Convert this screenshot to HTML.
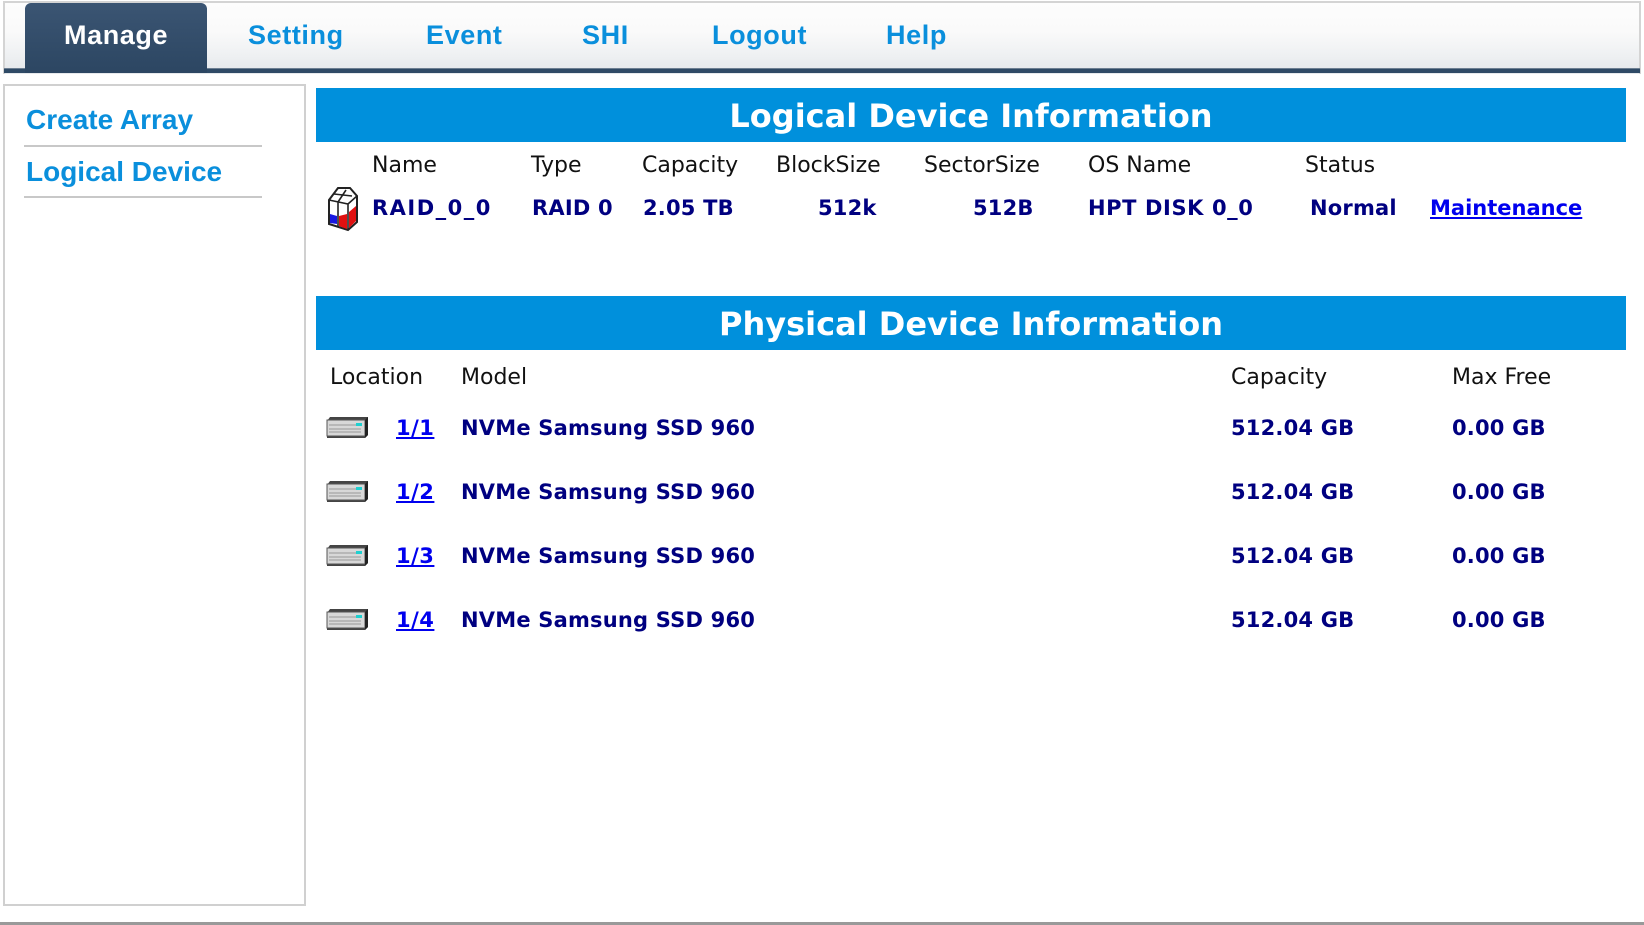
<!DOCTYPE html>
<html><head><meta charset="utf-8"><style>
*{margin:0;padding:0;box-sizing:border-box}
body{width:1644px;height:925px;background:#fff;position:relative;overflow:hidden;font-family:"DejaVu Sans",Verdana,sans-serif}
.a{position:absolute;white-space:nowrap}
#hdr{position:absolute;left:3px;top:1px;width:1638px;height:73px;border:2px solid #d4d4d4;border-bottom:none;background:linear-gradient(#fdfdfd 0,#fafafa 40%,#eef0f2 75%,#e6e9ec 95%)}
#line{position:absolute;left:4px;top:68px;width:1636px;height:5px;background:#2f4a66;border-top:1px solid #6d7f92}
#tab{position:absolute;left:25px;top:3px;width:182px;height:70px;background:linear-gradient(#3b5573,#2c4662);border-radius:6px 6px 0 0}
.nav{font-family:"Liberation Sans",Arial,sans-serif;font-weight:bold;font-size:27px;letter-spacing:0.6px;color:#0a8fdc;top:20px}
#side{position:absolute;left:3px;top:84px;width:303px;height:822px;border:2px solid #d0d0d0}
.sl{font-family:"Liberation Sans",Arial,sans-serif;font-weight:bold;font-size:28px;color:#0a8fdc;left:26px}
.hr{position:absolute;left:24px;width:238px;height:2px;background:#c8c8c8}
.bar{position:absolute;left:316px;width:1310px;height:54px;background:#0090dc;color:#fff;font-weight:bold;font-size:32px;text-align:center;line-height:56px}
.h{font-size:22px;color:#111}
.v{font-size:21px;font-weight:bold;color:#000080;letter-spacing:0.2px}
.lk{font-size:21px;font-weight:bold;color:#0000ee;text-decoration:underline;letter-spacing:0.5px}
#bot{position:absolute;left:0;top:922px;width:1644px;height:3px;background:#999}
</style></head><body>
<div id="hdr"></div>
<div id="line"></div>
<div id="tab"></div>
<div class="a nav" style="left:64px;color:#fff">Manage</div>
<div class="a nav" style="left:248px">Setting</div>
<div class="a nav" style="left:426px">Event</div>
<div class="a nav" style="left:582px">SHI</div>
<div class="a nav" style="left:712px">Logout</div>
<div class="a nav" style="left:886px">Help</div>

<div id="side"></div>
<div class="a sl" style="top:104px">Create Array</div>
<div class="hr" style="top:145px"></div>
<div class="a sl" style="top:156px">Logical Device</div>
<div class="hr" style="top:196px"></div>

<div class="bar" style="top:88px">Logical Device Information</div>
<div class="a h" style="left:372px;top:153px">Name</div>
<div class="a h" style="left:531px;top:153px">Type</div>
<div class="a h" style="left:642px;top:153px">Capacity</div>
<div class="a h" style="left:776px;top:153px">BlockSize</div>
<div class="a h" style="left:924px;top:153px">SectorSize</div>
<div class="a h" style="left:1088px;top:153px">OS Name</div>
<div class="a h" style="left:1305px;top:153px">Status</div>

<svg class="a" style="left:326px;top:184px" width="34" height="48" viewBox="0 0 34 48">
<path d="M3 16 L12 4 L24 4 L31 12 L31 38 L22 46 L3 40 Z" fill="#fff" stroke="#222" stroke-width="2"/>
<path d="M3 16 L22 20 L31 12 M22 20 L22 46 M12 18 L12 42 M12 18 L20 6 M8 10 L26 12" fill="none" stroke="#222" stroke-width="1.6"/>
<path d="M4 30 L11 32 L11 40 L4 39 Z" fill="#1818e0"/>
<path d="M13 32 L21 30 L21 45 L13 42 Z" fill="#e01010"/>
<path d="M23 28 L30 22 L30 37 L23 44 Z" fill="#e01010"/>
</svg>
<div class="a v" style="left:372px;top:196px;letter-spacing:1.5px">RAID_0_0</div>
<div class="a v" style="left:532px;top:196px">RAID 0</div>
<div class="a v" style="left:643px;top:196px">2.05 TB</div>
<div class="a v" style="left:818px;top:196px">512k</div>
<div class="a v" style="left:973px;top:196px">512B</div>
<div class="a v" style="left:1088px;top:196px;letter-spacing:0.6px">HPT DISK 0_0</div>
<div class="a v" style="left:1310px;top:196px">Normal</div>
<div class="a lk" style="left:1430px;top:196px;letter-spacing:0">Maintenance</div>

<div class="bar" style="top:296px">Physical Device Information</div>
<div class="a h" style="left:330px;top:365px">Location</div>
<div class="a h" style="left:461px;top:365px">Model</div>
<div class="a h" style="left:1231px;top:365px">Capacity</div>
<div class="a h" style="left:1452px;top:365px">Max Free</div>

<svg class="a" style="left:325px;top:416px" width="45" height="24" viewBox="0 0 45 24"><defs><g id="d"><path d="M2 5 L5 1 L43 1 L43 19 L40 22 L2 22 Z" fill="#444"/><rect x="2" y="4" width="38" height="16" fill="#d8d8d8" stroke="#555"/><path d="M4 9 H36 M4 13 H36 M4 16 H36" stroke="#999"/><rect x="31" y="7" width="6" height="3" fill="#1fd0d0"/><path d="M40 4 L43 1 L43 19 L40 22 Z" fill="#222"/></g></defs><use href="#d"/></svg>
<svg class="a" style="left:325px;top:480px" width="45" height="24" viewBox="0 0 45 24"><use href="#d"/></svg>
<svg class="a" style="left:325px;top:544px" width="45" height="24" viewBox="0 0 45 24"><use href="#d"/></svg>
<svg class="a" style="left:325px;top:608px" width="45" height="24" viewBox="0 0 45 24"><use href="#d"/></svg>

<div class="a lk" style="left:396px;top:416px">1/1</div>
<div class="a v" style="left:461px;top:416px">NVMe Samsung SSD 960</div>
<div class="a v" style="left:1231px;top:416px">512.04 GB</div>
<div class="a v" style="left:1452px;top:416px">0.00 GB</div>

<div class="a lk" style="left:396px;top:480px">1/2</div>
<div class="a v" style="left:461px;top:480px">NVMe Samsung SSD 960</div>
<div class="a v" style="left:1231px;top:480px">512.04 GB</div>
<div class="a v" style="left:1452px;top:480px">0.00 GB</div>

<div class="a lk" style="left:396px;top:544px">1/3</div>
<div class="a v" style="left:461px;top:544px">NVMe Samsung SSD 960</div>
<div class="a v" style="left:1231px;top:544px">512.04 GB</div>
<div class="a v" style="left:1452px;top:544px">0.00 GB</div>

<div class="a lk" style="left:396px;top:608px">1/4</div>
<div class="a v" style="left:461px;top:608px">NVMe Samsung SSD 960</div>
<div class="a v" style="left:1231px;top:608px">512.04 GB</div>
<div class="a v" style="left:1452px;top:608px">0.00 GB</div>

<div id="bot"></div>
</body></html>
